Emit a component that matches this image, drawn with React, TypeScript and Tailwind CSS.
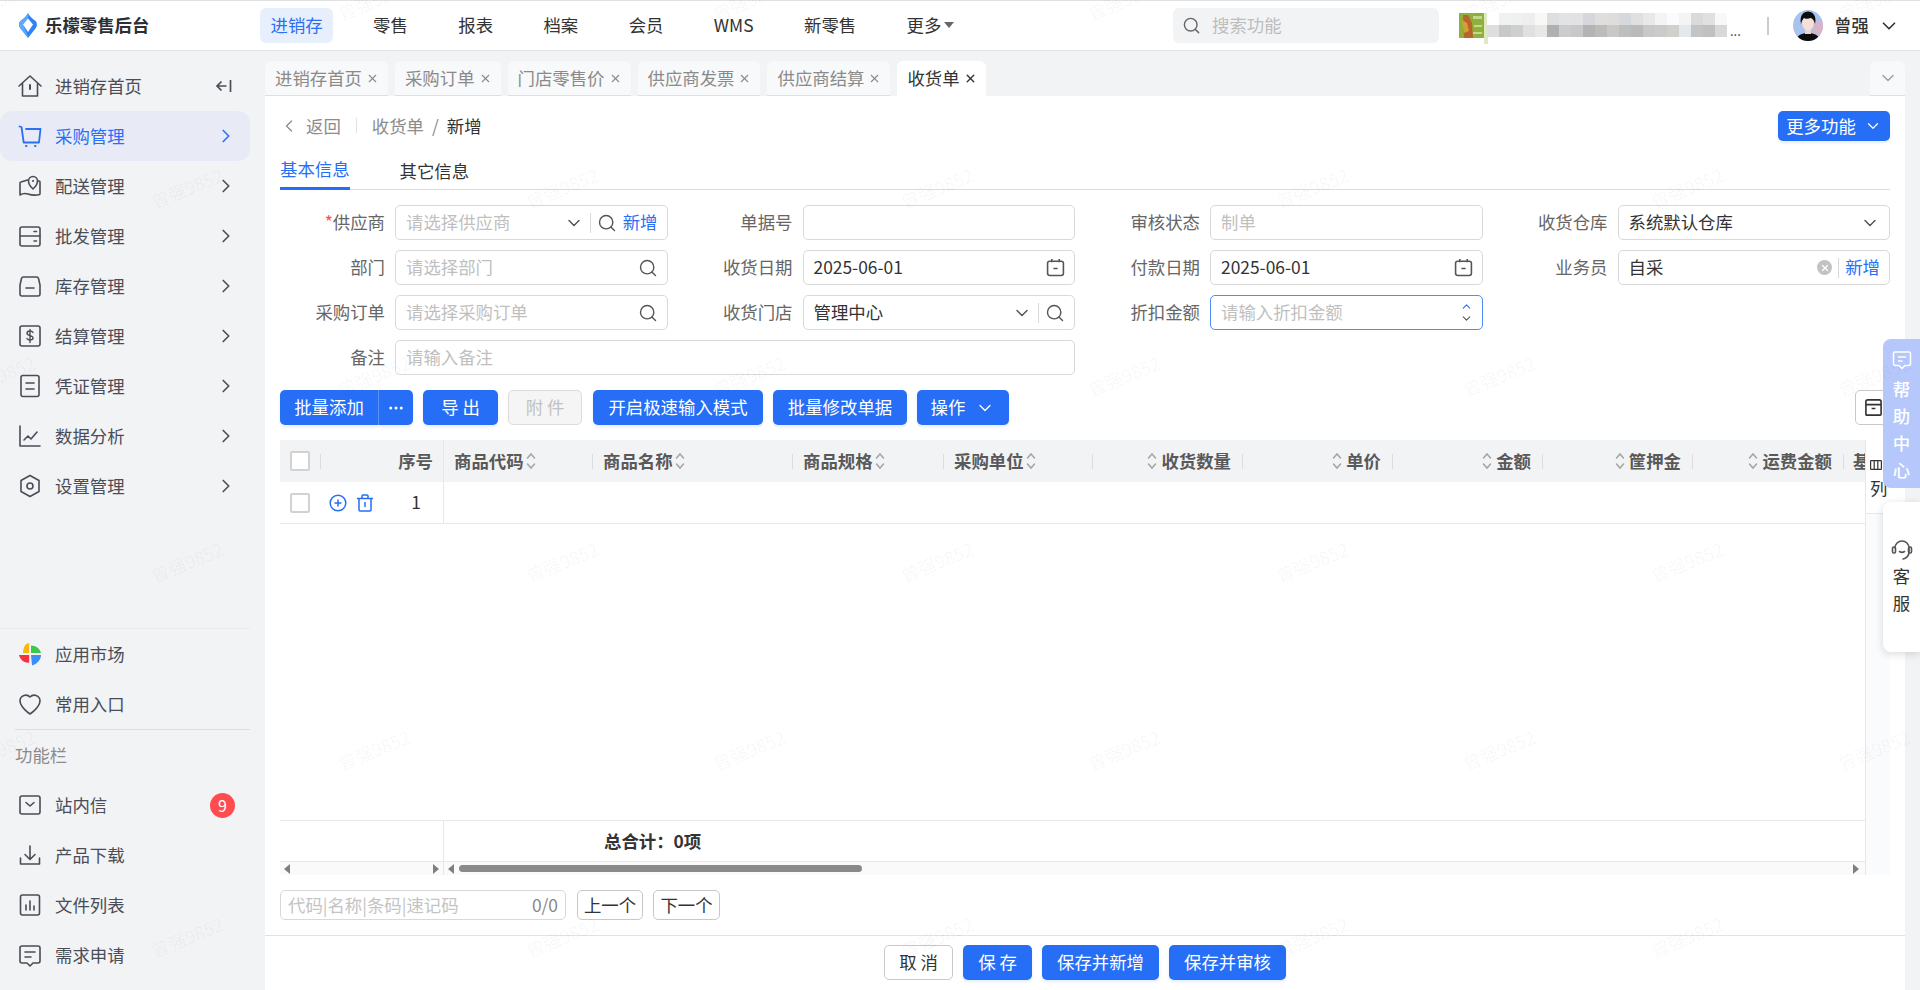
import * as React from 'react';
import { ChevronDown, ChevronLeft, ChevronRight, ChevronUp, Search, X, MoreHorizontal } from 'lucide-react';

type IconProps = { className?: string };

const S = ({ children, className }: { children: React.ReactNode; className?: string }) => (
  <svg
    viewBox="0 0 24 24"
    fill="none"
    stroke="currentColor"
    strokeWidth={1.6}
    strokeLinecap="round"
    strokeLinejoin="round"
    className={className ?? 'h-[24px] w-[24px] shrink-0'}
  >
    {children}
  </svg>
);

// 侧边栏图标
const HomeIcon = (p: IconProps) => (
  <S {...p}>
    <path d="M1 12 12 2l11 10M4.500 9.500V22h15V9.500" />
    <path d="M12 11v4" strokeWidth={2} />
  </S>
);
const CartIcon = (p: IconProps) => (
  <S {...p}>
    <path d="M1.500 2.500 3.500 3l2.200 15.500h15.300l1.500-13.500H8" strokeWidth={1.8} />
    <path d="M8 22h.5M17 22h.5" strokeWidth={2} />
  </S>
);
const MapIcon = (p: IconProps) => (
  <S {...p}>
    <path d="M9.500 6 3 8a1 1 0 0 0-1 1v12c3-2 5-2 8-1s6 2 11.500.5a1 1 0 0 0 .5-1V8a1 1 0 0 0-1-1h-1" />
    <path d="M15 15s-4.500-4-4.500-8a4.500 4.500 0 0 1 9 0c0 4-4.500 8-4.500 8Z" />
    <path d="M15 7h.1" strokeWidth={2} />
  </S>
);
const WalletIcon = (p: IconProps) => (
  <S {...p}>
    <rect x="2" y="3" width="20" height="19" rx="2" />
    <path d="M2 12h20M16 7.500h2.500M16 17h2.500" />
  </S>
);
const BoxIcon = (p: IconProps) => (
  <S {...p}>
    <path d="M5.500 3h13a2 2 0 0 1 2 1.500L22 11v9a2 2 0 0 1-2 2H4a2 2 0 0 1-2-2v-9l1.500-6.500A2 2 0 0 1 5.500 3Z" />
    <path d="M8 14h8" />
  </S>
);
const SettleIcon = (p: IconProps) => (
  <S {...p}>
    <rect x="2" y="2" width="20" height="20" rx="2" />
    <path d="M15 8.500c-.5-1-1.500-1.500-3-1.500-2 0-3 1-3 2.300 0 3 6 1.700 6 4.700 0 1.300-1 2-3 2-1.500 0-2.500-.5-3-1.500M12 5.500v13" strokeWidth={1.4} />
  </S>
);
const VoucherIcon = (p: IconProps) => (
  <S {...p}>
    <rect x="3" y="1.500" width="18" height="21" rx="2" />
    <path d="M8 9h8M8 15h8" />
  </S>
);
const ChartIcon = (p: IconProps) => (
  <S {...p}>
    <path d="M2 2v20h20" />
    <path d="M6 16l4-4 3 3 6-7" />
  </S>
);
const GearIcon = (p: IconProps) => (
  <S {...p}>
    <path d="M12 1.500 21 6.500v11l-9 5-9-5v-11Z" />
    <circle cx="12" cy="12" r="3" />
  </S>
);
const HeartIcon = (p: IconProps) => (
  <S {...p}>
    <path d="M12 22S2 15.500 2 8.500A5.800 5.800 0 0 1 12 5a5.800 5.800 0 0 1 10 3.500C22 15.500 12 22 12 22Z" />
  </S>
);
const MailIcon = (p: IconProps) => (
  <S {...p}>
    <rect x="2" y="3" width="20" height="18" rx="2" />
    <path d="M8 9.500 12 13l4-3.500" />
  </S>
);
const DownloadIcon = (p: IconProps) => (
  <S {...p}>
    <path d="M12 3v13M7 11.500l5 5 5-5M2.500 15v6h19v-6" />
  </S>
);
const FilesIcon = (p: IconProps) => (
  <S {...p}>
    <rect x="2.500" y="2" width="19" height="20" rx="2" />
    <path d="M8 17v-5M12 17V8M16 17v-4" />
  </S>
);
const RequestIcon = (p: IconProps) => (
  <S {...p}>
    <path d="M4 3h16a2 2 0 0 1 2 2v13a2 2 0 0 1-2 2h-5l-3 3-3-3H4a2 2 0 0 1-2-2V5a2 2 0 0 1 2-2Z" />
    <path d="M7 9h10M7 14h6" />
  </S>
);
const PinwheelIcon = (p: IconProps) => (
  <svg viewBox="0 0 24 24" className={p.className ?? 'h-[24px] w-[24px] shrink-0'}>
    <path d="M11.200 1C7 1.500 5 6 5 11h6.200Z" fill="#fbb80f" />
    <path d="M13 3.500c5 0 9 3.500 10 7.500H13Z" fill="#3ec84a" />
    <path d="M13 13h10c0 5-4 9-9 10.500Z" fill="#3b8ff5" />
    <path d="M1 13h10.200v7.500C7 21.500 2 18 1 13Z" fill="#f5333f" />
  </svg>
);

const Logo = () => (
  <svg viewBox="0 0 18 25" className="h-[25px] w-[18px] shrink-0">
    <path d="M9 0c1 2.500 3 4.500 7 7.500 2.500 2 2.500 5.500.5 8L9 25 1.500 15.500c-2-2.500-2-6 .5-8C6 4.500 8 2.500 9 0Z" fill="#2f83f6" />
    <path d="M0 11.500C.2 10 1 8.500 2 7.500 6 4.500 8 2.500 9 0v5L4 11l5 13v1L1.500 15.500C.5 14.300 0 13 0 11.500Z" fill="#5fa8fb" />
    <path d="M9 5.500 14 11.500 9 19 4 11.500Z" fill="#fff" />
  </svg>
);

const Avatar = () => (
  <svg viewBox="0 0 30 31" className="h-[31px] w-[30px] shrink-0">
    <defs>
      <clipPath id="av">
        <ellipse cx="15" cy="15.500" rx="15" ry="15.500" />
      </clipPath>
    </defs>
    <g clipPath="url(#av)">
      <rect width="30" height="31" fill="#a9c3ef" />
      <rect x="21" y="12" width="9" height="14" fill="#d8b4c8" />
      <path d="M3 31c1-6 6-8 12-8s11 2 12 8Z" fill="#0c0c0c" />
      <rect x="12" y="17" width="6" height="7" fill="#eed4c8" />
      <ellipse cx="15" cy="13" rx="6" ry="7.500" fill="#f4e0d8" />
      <path d="M8 14C6 5 11 1.500 15 1.500S24 5 22 14c-.5-3-2-5-4-6-3 1-6 1-7 0-1 1-2.500 3-3 6Z" fill="#0c0c0c" />
    </g>
  </svg>
);

// 门店名打了马赛克
const mosaic = [
  ['#ffffff', '#f0f1f1', '#eff0f0', '#eeeeee', '#f8f8f6', '#dddee0', '#e2e3e5', '#e2e2e4', '#d6d7da', '#dfdedc', '#dedddb', '#d5d8dc', '#e0e0e0', '#e8e8e8', '#f2f4f6', '#fbfbfb', '#f4f4f4', '#dadada', '#e0e0e0', '#f8f8f8'],
  ['#dedede', '#c8c8c8', '#cfcfcf', '#e0e0e0', '#e8e8e6', '#b0b0b0', '#cccccc', '#c8c8c8', '#b4b4b4', '#bcbcba', '#c8c8c8', '#bebebe', '#bcbab8', '#c8c8c8', '#cbcbcb', '#d0d0cc', '#e4e8ec', '#c4c4c4', '#c0c0c0', '#d8d8d8'],
];
const BlurredShop = () => (
  <svg viewBox="0 0 246 40" className="h-[40px] w-[246px] shrink-0">
    <rect x="0" y="7" width="4" height="31" fill="#dfe7c4" />
    {mosaic.map((row, r) =>
      row.map((c, i) => <rect key={`${r}-${i}`} x={3 + i * 12} y={7 + r * 12} width="12" height="12" fill={c} />),
    )}
  </svg>
);

const ShopThumb = () => (
  <svg viewBox="0 0 25 25" className="h-[25px] w-[25px] shrink-0">
    <rect width="25" height="25" fill="#8fb13c" />
    <path d="M4 2h5l4 8 1 15H5Z" fill="#b8642c" />
    <path d="M3 7l5 3 2 8-5 2Z" fill="#d2a035" />
    <path d="M14 3h9v3h-9ZM15 12h8v2h-8ZM14 19h9v2h-9Z" fill="#c5d98a" />
  </svg>
);

const menuTop = [
  { label: '进销存首页', icon: HomeIcon, collapse: true },
  { label: '采购管理', icon: CartIcon, active: true, arrow: true },
  { label: '配送管理', icon: MapIcon, arrow: true },
  { label: '批发管理', icon: WalletIcon, arrow: true },
  { label: '库存管理', icon: BoxIcon, arrow: true },
  { label: '结算管理', icon: SettleIcon, arrow: true },
  { label: '凭证管理', icon: VoucherIcon, arrow: true },
  { label: '数据分析', icon: ChartIcon, arrow: true },
  { label: '设置管理', icon: GearIcon, arrow: true },
];

function SideItem({ label, icon: Icon, active, arrow, collapse, badge }: {
  label: string;
  icon: (p: IconProps) => React.ReactNode;
  active?: boolean;
  arrow?: boolean;
  collapse?: boolean;
  badge?: string;
}) {
  return (
    <div
      className={`flex h-[50px] w-[250px] items-center gap-[13px] rounded-xl pl-[18px] pr-[13px] ${
        active ? 'bg-[#e8ebf5] text-[#2a6ff5]' : 'text-[#4a4d57]'
      }`}
    >
      <Icon />
      <span className="flex-1 text-[17.4px]">{label}</span>
      {arrow && <ChevronRight className="h-[22px] w-[22px]" strokeWidth={1.8} />}
      {collapse && (
        <svg viewBox="0 0 18 18" className="mr-[4px] h-[18px] w-[18px]" fill="none" stroke="currentColor" strokeWidth={1.7}>
          <path d="M15.500 3v12M11.500 9H2M6.500 4.500 2 9l4.500 4.500" />
        </svg>
      )}
      {badge && (
        <span className="mr-[2px] flex h-[25px] w-[25px] items-center justify-center rounded-full bg-[#ff4d4f] text-[16px] text-white">
          {badge}
        </span>
      )}
    </div>
  );
}

function Sidebar() {
  return (
    <aside className="flex w-[265px] shrink-0 flex-col bg-[#f2f3f5] pb-[10px] pt-[10px]">
      {menuTop.map((m) => (
        <SideItem key={m.label} {...m} />
      ))}
      <div className="flex-1" />
      <div className="h-px w-[250px] bg-[#e8e9ec]" />
      <SideItem label="应用市场" icon={PinwheelIcon} />
      <SideItem label="常用入口" icon={HeartIcon} />
      <div className="ml-[15px] h-px w-[235px] bg-[#dcdde1]" />
      <div className="flex h-[50px] items-center pl-[15px] text-[17.4px] text-[#8c8c8c]">功能栏</div>
      <SideItem label="站内信" icon={MailIcon} badge="9" />
      <SideItem label="产品下载" icon={DownloadIcon} />
      <SideItem label="文件列表" icon={FilesIcon} />
      <SideItem label="需求申请" icon={RequestIcon} />
    </aside>
  );
}

const navItems = ['零售', '报表', '档案', '会员', 'WMS', '新零售'];

function Header() {
  return (
    <header className="flex h-[51px] shrink-0 items-center border-b border-t border-[#e0e1e3] bg-white pl-[19px]">
      <Logo />
      <span className="ml-[8px] w-[215px] shrink-0 text-[17.4px] font-bold text-[#2d2f36]">乐檬零售后台</span>
      <nav className="flex w-[715px] shrink-0 items-center gap-[29.400px] whitespace-nowrap text-[17.4px] text-[#333]">
        <span className="flex h-[35px] items-center rounded-md bg-[#e8effc] px-[10.500px] text-[#2a6ff5]">进销存</span>
        {navItems.map((n) => (
          <span key={n} className="px-[10.500px]">
            {n}
          </span>
        ))}
        <span className="flex items-center gap-[3px] px-[10.500px]">
          更多
          <span className="h-0 w-0 border-x-[5px] border-t-[6px] border-x-transparent border-t-[#666]" />
        </span>
      </nav>
      <div className="ml-[198px] flex h-[35px] w-[266px] shrink-0 items-center gap-[11px] rounded-md bg-[#f2f3f5] pl-[9px] text-[17.4px] text-[#bdbdbd]">
        <Search className="h-[19px] w-[19px] text-[#666]" strokeWidth={1.8} />
        搜索功能
      </div>
      <div className="ml-[20px] flex w-[300px] shrink-0 items-center">
        <ShopThumb />
        <BlurredShop />
        <span className="mt-[10px] text-[13px] leading-none text-[#333]">...</span>
      </div>
      <span className="ml-[8px] h-[18px] w-[2px] shrink-0 bg-[#ccc]" />
      <div className="ml-[24px] flex items-center">
        <Avatar />
        <span className="ml-[11px] text-[17.4px] font-medium text-[#333]">曾强</span>
        <ChevronDown className="ml-[9px] h-[22px] w-[22px] text-[#333]" strokeWidth={1.8} />
      </div>
    </header>
  );
}

const tabs = ['进销存首页', '采购订单', '门店零售价', '供应商发票', '供应商结算'];

function TabBar() {
  return (
    <div className="flex h-[45px] shrink-0 items-end gap-[7px] bg-[#f2f3f5]">
      {tabs.map((t) => (
        <div
          key={t}
          className="flex h-[35px] items-center gap-[4px] rounded-t-md border-b border-[#dedfe2] bg-[#f8f9fa] pl-[10px] pr-[9px] text-[17.4px] text-[#8a8a8a]"
        >
          {t}
          <X className="h-[13px] w-[13px]" strokeWidth={2} />
        </div>
      ))}
      <div className="flex h-[35px] items-center gap-[4px] rounded-t-md bg-white pl-[10px] pr-[9px] text-[17.4px] text-[#333]">
        收货单
        <X className="h-[13px] w-[13px]" strokeWidth={2.6} />
      </div>
      <div className="ml-auto flex h-[35px] w-[35px] items-center justify-center rounded-t-md border-b border-[#dedfe2] bg-[#f8f9fa] text-[#999]">
        <ChevronDown className="h-[20px] w-[20px]" strokeWidth={1.6} />
      </div>
    </div>
  );
}

const box = 'flex h-[35px] items-center rounded-[5px] border border-[#d9d9d9] bg-white pl-[10px] pr-[9px] text-[17.4px]';

const Search17 = () => <Search className="h-[20px] w-[20px] shrink-0 text-[#555]" strokeWidth={1.7} />;
const Down = () => <ChevronDown className="h-[20px] w-[20px] shrink-0 text-[#555]" strokeWidth={1.8} />;
const Sep = () => <span className="mx-[6px] h-[20px] w-px shrink-0 bg-[#d9d9d9]" />;
const Calendar = () => (
  <svg viewBox="0 0 18 18" className="h-[19px] w-[19px] shrink-0" fill="none" stroke="#555" strokeWidth={1.5}>
    <rect x="1.500" y="3" width="15" height="13.500" rx="2" />
    <path d="M5.500 1v3M12.500 1v3M7 10h4" />
  </svg>
);

function Field({ label, required, span2, children }: {
  label: string;
  required?: boolean;
  span2?: boolean;
  children: React.ReactNode;
}) {
  return (
    <div className={`flex items-center gap-[10px] ${span2 ? 'col-span-2' : ''}`}>
      <label className="w-[105px] shrink-0 text-right text-[17.4px] text-[#666]">
        {required && <span className="text-[#ff4d4f]">*</span>}
        {label}
      </label>
      <div className="min-w-0 flex-1">{children}</div>
    </div>
  );
}

const Ph = ({ children }: { children?: React.ReactNode }) => <span className="flex-1 text-[#bfbfbf]">{children}</span>;
const Val = ({ children }: { children?: React.ReactNode }) => <span className="flex-1 text-[#333]">{children}</span>;

function FormGrid() {
  return (
    <div className="mt-[15px] grid grid-cols-4 gap-x-[20px] gap-y-[10px]">
      <Field label="供应商" required>
        <div className={box}>
          <Ph>请选择供应商</Ph>
          <Down />
          <Sep />
          <Search17 />
          <span className="ml-[6px] text-[#2a6ff5]">新增</span>
        </div>
      </Field>
      <Field label="单据号">
        <div className={box} />
      </Field>
      <Field label="审核状态">
        <div className={box}>
          <Ph>制单</Ph>
        </div>
      </Field>
      <Field label="收货仓库">
        <div className={box}>
          <Val>系统默认仓库</Val>
          <Down />
        </div>
      </Field>
      <Field label="部门">
        <div className={box}>
          <Ph>请选择部门</Ph>
          <Search17 />
        </div>
      </Field>
      <Field label="收货日期">
        <div className={box}>
          <Val>2025-06-01</Val>
          <Calendar />
        </div>
      </Field>
      <Field label="付款日期">
        <div className={box}>
          <Val>2025-06-01</Val>
          <Calendar />
        </div>
      </Field>
      <Field label="业务员">
        <div className={box}>
          <Val>自采</Val>
          <span className="flex h-[15px] w-[15px] items-center justify-center rounded-full bg-[#c2c2c2]">
            <X className="h-[10px] w-[10px] text-white" strokeWidth={3} />
          </span>
          <Sep />
          <span className="text-[#2a6ff5]">新增</span>
        </div>
      </Field>
      <Field label="采购订单">
        <div className={box}>
          <Ph>请选择采购订单</Ph>
          <Search17 />
        </div>
      </Field>
      <Field label="收货门店">
        <div className={box}>
          <Val>管理中心</Val>
          <Down />
          <Sep />
          <Search17 />
        </div>
      </Field>
      <Field label="折扣金额">
        <div className={`${box} !border-[#4d8ef5]`}>
          <Ph>请输入折扣金额</Ph>
          <span className="flex flex-col items-center">
            <ChevronUp className="-mb-[1px] h-[13px] w-[13px] text-[#2a6ff5]" strokeWidth={2} />
            <ChevronDown className="h-[13px] w-[13px] text-[#555]" strokeWidth={2} />
          </span>
        </div>
      </Field>
      <div />
      <Field label="备注" span2>
        <div className={box}>
          <Ph>请输入备注</Ph>
        </div>
      </Field>
    </div>
  );
}

const primaryBtn = 'flex h-[35px] items-center justify-center rounded-[5px] bg-[#266ef6] text-[17.4px] text-white shadow-[0_2px_3px_rgba(38,110,246,0.12)]';

function Toolbar() {
  return (
    <div className="mt-[15px] flex items-center gap-[10px]">
      <div className={`${primaryBtn} w-[133px]`}>
        <span className="flex h-full w-[99px] items-center justify-center border-r border-[#5b92f8]">批量添加</span>
        <MoreHorizontal className="mx-auto h-[18px] w-[18px]" strokeWidth={2} />
      </div>
      <div className={`${primaryBtn} w-[75px]`}>导 出</div>
      <div className="flex h-[35px] w-[74px] items-center justify-center rounded-[5px] border border-[#dcdcdc] bg-[#f5f5f5] text-[17.4px] text-[#c2c2c2]">
        附 件
      </div>
      <div className={`${primaryBtn} ml-px w-[170px]`}>开启极速输入模式</div>
      <div className={`${primaryBtn} w-[134px]`}>批量修改单据</div>
      <div className={`${primaryBtn} w-[92px] gap-[10px]`}>
        操作
        <ChevronDown className="h-[20px] w-[20px]" strokeWidth={1.6} />
      </div>
      <div className="ml-auto flex h-[35px] w-[35px] items-center justify-start rounded-[5px] border border-[#c8c8c8] bg-white pl-[8px]">
        <svg viewBox="0 0 20 20" className="h-[19px] w-[19px]" fill="none" stroke="#333" strokeWidth={1.7}>
          <path d="M2 7V4a2 2 0 0 1 2-2h12a2 2 0 0 1 2 2v3M2 7h16v10a1 1 0 0 1-1 1H3a1 1 0 0 1-1-1ZM8 11h4" />
        </svg>
      </div>
    </div>
  );
}

const SortIcon = () => (
  <svg viewBox="0 0 10 18" className="h-[18px] w-[10px] shrink-0" fill="none" stroke="#a6a6a6" strokeWidth={1.6} strokeLinecap="round">
    <path d="M1.500 6 5 2l3.500 4M1.500 12 5 16l3.500-4" />
  </svg>
);

const HeadSep = () => <span className="block h-[15px] w-px shrink-0 bg-[#dcdde0]" />;

const columns = [
  { label: '商品代码', w: 'w-[149px]' },
  { label: '商品名称', w: 'w-[200px]' },
  { label: '商品规格', w: 'w-[151px]' },
  { label: '采购单位', w: 'w-[149px]' },
  { label: '收货数量', w: 'w-[150px]', right: true },
  { label: '单价', w: 'w-[150px]', right: true },
  { label: '金额', w: 'w-[150px]', right: true },
  { label: '筐押金', w: 'w-[150px]', right: true },
  { label: '运费金额', w: 'w-[151px]', right: true },
];

const Check = () => <span className="h-[20px] w-[20px] shrink-0 rounded-[2px] border-2 border-[#d2d2d2] bg-white" />;

const Arrow = ({ dir, className }: { dir: 'l' | 'r'; className?: string }) => (
  <svg viewBox="0 0 6 10" className={`h-[10px] w-[6px] shrink-0 ${className ?? ''}`}>
    <path d={dir === 'l' ? 'M6 0v10L0 5Z' : 'M0 0v10l6-5Z'} fill="#7f7f7f" />
  </svg>
);

function GoodsTable() {
  return (
    <div className="mt-[15px] flex h-[435px]">
      <div className="flex w-[1585px] flex-col">
        <div className="flex h-[42px] shrink-0 bg-[#f2f3f5] text-[17.4px] font-semibold text-[#595959]">
          <div className="flex w-[164px] shrink-0 items-center border-r border-[#e6e7ea] pl-[10px] pr-[10px]">
            <Check />
            <span className="ml-[10px]"><HeadSep /></span>
            <span className="ml-auto">序号</span>
          </div>
          <div className="flex min-w-0 flex-1 overflow-hidden">
            {columns.map((c) =>
              c.right ? (
                <div key={c.label} className={`flex ${c.w} shrink-0 items-center justify-end gap-[1px]`}>
                  <SortIcon />
                  <span className="ml-[3px]">{c.label}</span>
                  <span className="ml-[10px] flex items-center"><HeadSep /></span>
                </div>
              ) : (
                <div key={c.label} className={`flex ${c.w} shrink-0 items-center pl-[10px]`}>
                  <span>{c.label}</span>
                  <span className="ml-[2px]"><SortIcon /></span>
                  <span className="ml-auto flex items-center"><HeadSep /></span>
                </div>
              ),
            )}
            <div className="flex shrink-0 items-center pl-[9px]">基本单位</div>
          </div>
        </div>
        <div className="flex h-[42px] shrink-0 border-b border-[#e8e8e8] text-[17.4px] text-[#333]">
          <div className="flex w-[164px] shrink-0 items-center border-r border-[#e6e7ea] pl-[10px] pr-[22px]">
            <Check />
            <svg viewBox="0 0 18 18" className="ml-[19px] h-[18px] w-[18px]" fill="none" stroke="#266ef6" strokeWidth={1.5}>
              <circle cx="9" cy="9" r="7.800" />
              <path d="M9 5.500v7M5.500 9h7" />
            </svg>
            <svg viewBox="0 0 18 18" className="ml-[9px] h-[18px] w-[18px]" fill="none" stroke="#266ef6" strokeWidth={1.5}>
              <path d="M1 4.500h16M3 4.500V16a1 1 0 0 0 1 1h10a1 1 0 0 0 1-1V4.500M6 4.500V2a1 1 0 0 1 1-1h4a1 1 0 0 1 1 1v2.500M9 8v5" />
            </svg>
            <span className="ml-auto">1</span>
          </div>
        </div>
        <div className="flex-1" />
        <div className="flex h-[42px] shrink-0 border-b border-t border-[#e8e8e8]">
          <div className="w-[164px] shrink-0 border-r border-[#e6e7ea]" />
          <span className="ml-[160px] self-center text-[17.4px] font-bold text-[#333]">总合计：0项</span>
        </div>
        <div className="flex h-[13px] shrink-0 items-center bg-[#fafafa]">
          <div className="flex h-full w-[164px] shrink-0 items-center justify-between border-r border-[#e6e7ea] px-[4px]">
            <Arrow dir="l" />
            <Arrow dir="r" />
          </div>
          <Arrow dir="l" className="ml-[4px]" />
          <span className="ml-[5px] h-[7px] w-[403px] rounded-full bg-[#8a8a8a]" />
          <Arrow dir="r" className="ml-auto mr-[6px]" />
        </div>
      </div>
      <div className="flex w-[25px] shrink-0 flex-col border-l border-[#e8e8e8] bg-[#fafbfc]">
        <div className="flex h-[74px] shrink-0 flex-col items-center border-b border-[#e8e8e8] bg-white pl-[4px] pt-[20px] text-[17.4px] leading-none text-[#333]">
          <svg viewBox="0 0 12 10" className="mb-[9px] h-[10px] w-[12px] self-start" fill="none" stroke="#333" strokeWidth={1.2}>
            <path d="M.6.6h10.800M.6 9.400h10.800M.6.6v8.800M4.200.6v8.800M7.800.6v8.800M11.400.6v8.800" />
          </svg>
          <span className="self-start">列</span>
        </div>
      </div>
    </div>
  );
}

function LocateRow() {
  return (
    <div className="mt-[15px] flex items-center gap-[11px] text-[17.4px]">
      <div className="flex h-[30px] w-[286px] items-center rounded-[5px] border border-[#d9d9d9] pl-[7px] pr-[7px]">
        <span className="flex-1 text-[#c4c4c4]">代码|名称|条码|速记码</span>
        <span className="text-[#888]">0/0</span>
      </div>
      <div className="flex h-[30px] w-[66px] items-center justify-center rounded-[5px] border border-[#c8c8c8] text-[#333]">上一个</div>
      <div className="-ml-px flex h-[30px] w-[67px] items-center justify-center rounded-[5px] border border-[#c8c8c8] text-[#333]">下一个</div>
    </div>
  );
}

function FooterBar() {
  return (
    <div className="mt-[15px] flex h-[55px] shrink-0 items-start justify-center gap-[10px] border-t border-[#e2e2e2] pt-[9px]">
      <div className="flex h-[35px] w-[69px] items-center justify-center rounded-[5px] border border-[#c8c8c8] bg-white text-[17.4px] text-[#333]">取 消</div>
      <div className={`${primaryBtn} w-[69px]`}>保 存</div>
      <div className={`${primaryBtn} w-[117px]`}>保存并新增</div>
      <div className={`${primaryBtn} w-[117px]`}>保存并审核</div>
    </div>
  );
}

function FloatTabs() {
  return (
    <>
      <div className="absolute right-0 top-[339px] flex h-[149px] w-[37px] flex-col items-center rounded-l-lg bg-[#b5c7fb] pt-[11px] text-[17.4px] font-medium leading-[27px] text-white">
        <svg viewBox="0 0 20 20" className="mb-[5px] h-[20px] w-[20px]" fill="none" stroke="#fff" strokeWidth={1.5} strokeLinejoin="round">
          <path d="M3 2h14a1.500 1.500 0 0 1 1.500 1.500V14a1.500 1.500 0 0 1-1.500 1.500h-4L10 18.500l-3-3H3A1.500 1.500 0 0 1 1.500 14V3.500A1.500 1.500 0 0 1 3 2Z" />
          <path d="M6 7h8M6 11h4.500" />
        </svg>
        <span>帮</span>
        <span>助</span>
        <span>中</span>
        <span>心</span>
      </div>
      <div className="absolute right-0 top-[502px] flex h-[150px] w-[37px] flex-col items-center rounded-l-lg bg-white pt-[36px] text-[17.4px] leading-[27px] text-[#333] shadow-[0_2px_8px_rgba(0,0,0,0.15)]">
        <svg viewBox="0 0 22 22" className="mb-[2px] h-[22px] w-[22px]" fill="none" stroke="#555" strokeWidth={1.6} strokeLinecap="round">
          <path d="M4 10a7 7 0 0 1 14 0v4a7 7 0 0 1-6 7" />
          <rect x="1.500" y="9" width="3" height="6" rx="1.200" />
          <rect x="17.500" y="9" width="3" height="6" rx="1.200" />
          <path d="M8.500 13.500c1.500 1 3.500 1 5 0" />
        </svg>
        <span>客</span>
        <span>服</span>
      </div>
    </>
  );
}

// 水印:错位平铺
const watermarks = [
  [0, -1], [188, 187], [376, -1], [562, 187], [750, -1], [937, 187],
].flatMap(([y, x0]) => [0, 1, 2, 3, 4, 5].map((k) => ({ y, x: x0 + k * 375 })));

function Watermarks() {
  return (
    <div className="pointer-events-none absolute inset-0 overflow-hidden">
      {watermarks.map((w) => (
        <span
          key={`${w.x}-${w.y}`}
          className="absolute -translate-x-1/2 -translate-y-1/2 -rotate-[22deg] whitespace-nowrap text-[18px] text-black/[0.04]"
          style={{ left: w.x, top: w.y }}
        >
          曾强9852
        </span>
      ))}
    </div>
  );
}

export default function App() {
  return (
    <div className="relative flex h-[990px] w-full flex-col overflow-hidden bg-[#f2f3f5] font-['Noto_Sans_CJK_SC','Noto_Sans',sans-serif]">
      <Header />
      <div className="flex min-h-0 flex-1">
        <Sidebar />
        <main className="mr-[15px] flex min-w-0 flex-1 flex-col">
          <TabBar />
          <div className="flex min-h-0 flex-1 flex-col bg-white">
            <div className="px-[15px] pt-[15px]">
              <div className="flex h-[30px] items-center justify-between text-[17.4px]">
                <div className="flex items-center text-[#8c8c8c]">
                  <ChevronLeft className="-ml-[1px] mr-[7px] h-[20px] w-[20px]" strokeWidth={1.6} />
                  返回
                  <span className="mx-[15px] h-[15px] w-px bg-[#e2e2e2]" />
                  收货单
                  <span className="mx-[8px]">/</span>
                  <span className="text-[#333]">新增</span>
                </div>
                <div className={`${primaryBtn} !h-[30px] w-[112px] gap-[8px]`}>
                  更多功能
                  <ChevronDown className="h-[18px] w-[18px]" strokeWidth={1.6} />
                </div>
              </div>
              <div className="flex h-[49px] items-end gap-[50px] border-b border-[#dcdcdc] text-[17.4px]">
                <span className="-mb-px border-b-[3px] border-[#266ef6] pb-[5px] text-[#266ef6]">基本信息</span>
                <span className="pb-[5px] text-[#333]">其它信息</span>
              </div>
              <FormGrid />
              <Toolbar />
              <GoodsTable />
              <LocateRow />
            </div>
            <FooterBar />
          </div>
        </main>
      </div>
      <FloatTabs />
      <Watermarks />
    </div>
  );
}
